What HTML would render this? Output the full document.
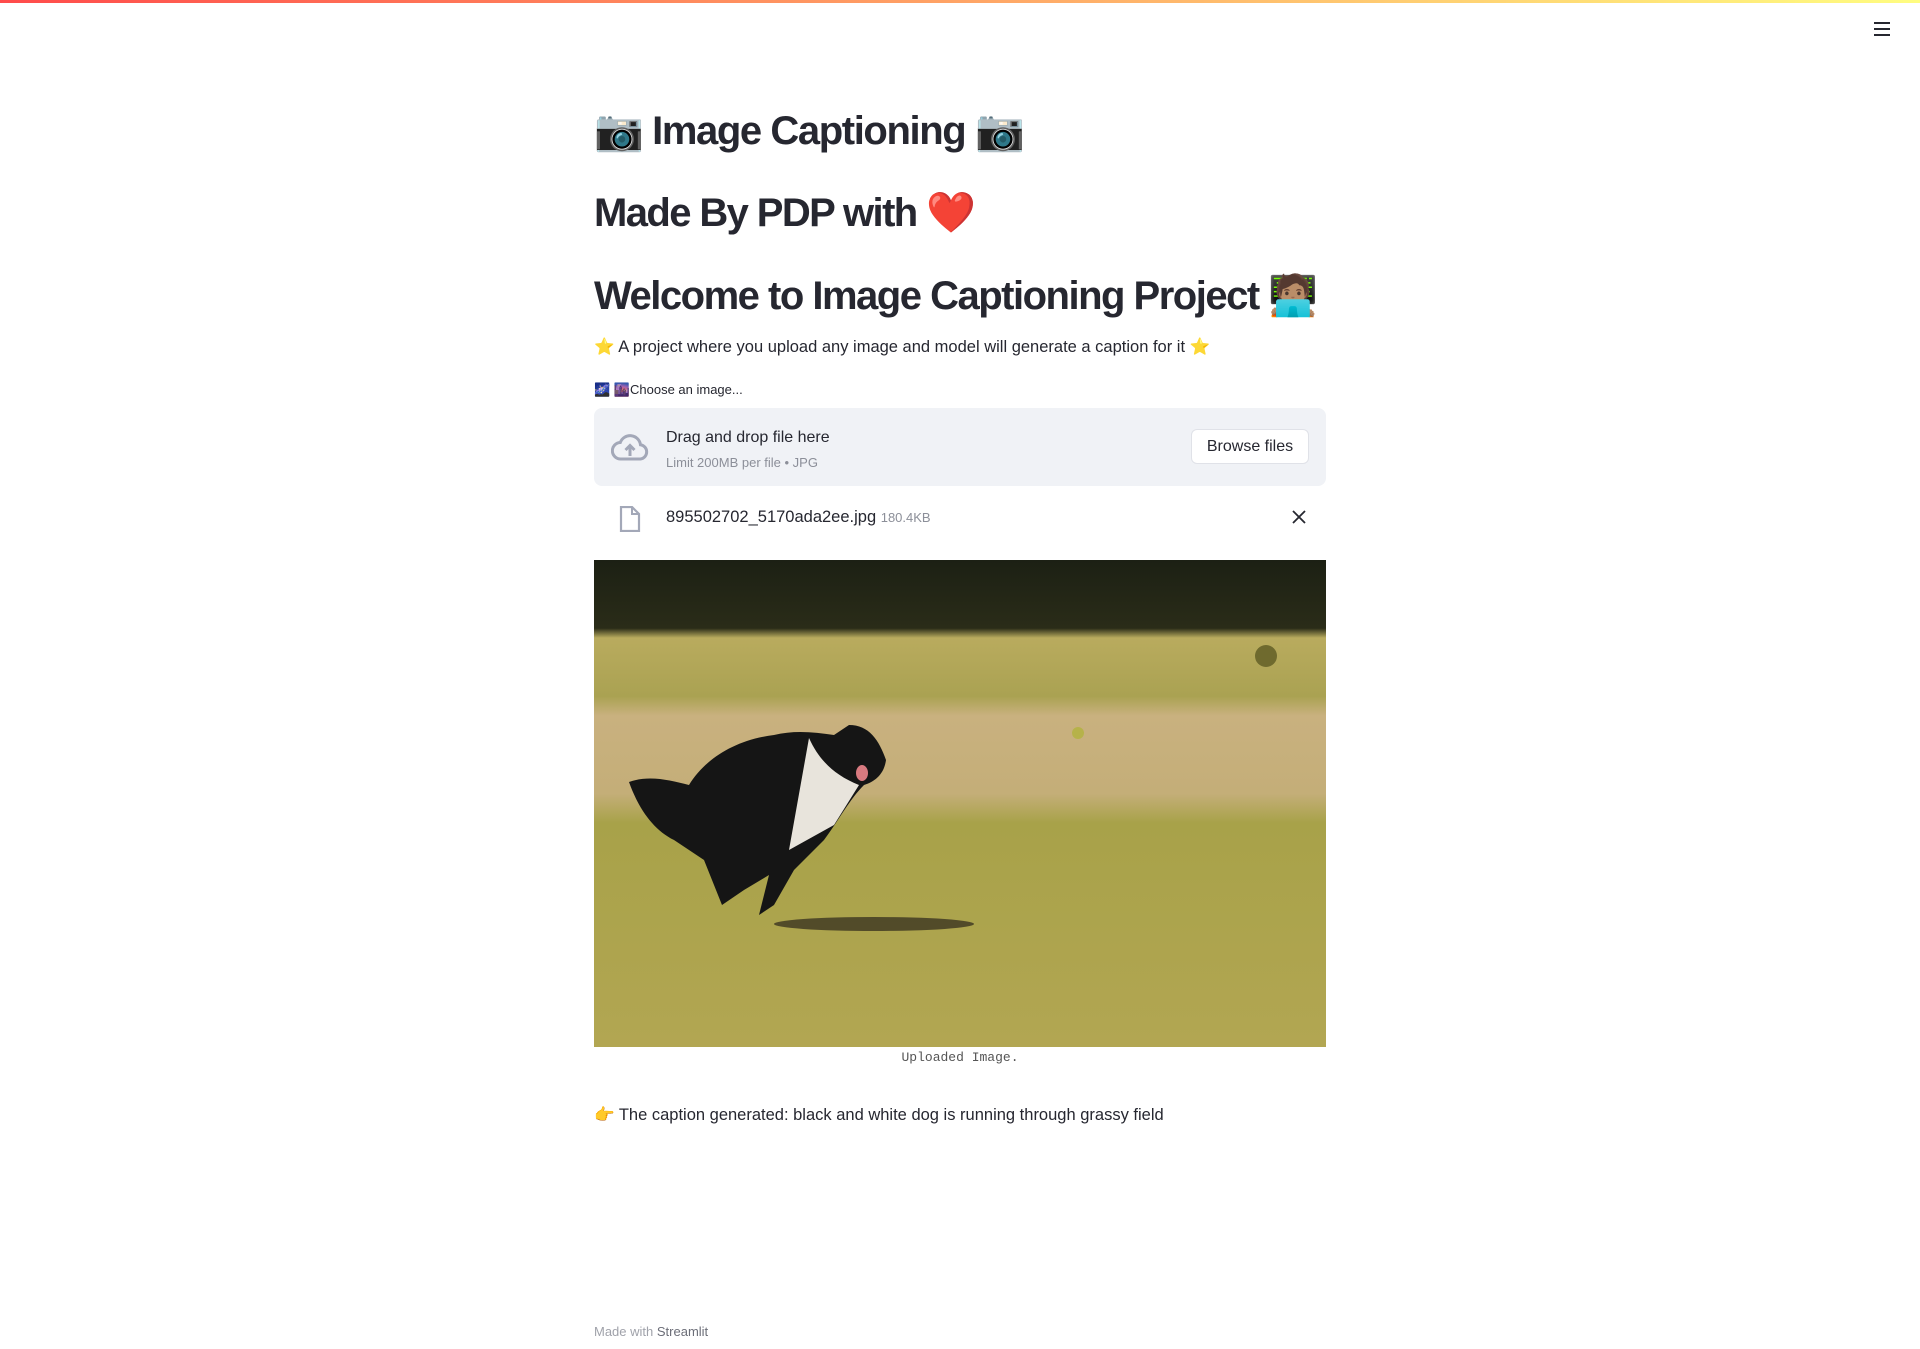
<!DOCTYPE html>
<html><head><meta charset="utf-8"><style>
*{margin:0;padding:0;box-sizing:border-box}
body{width:1920px;height:1349px;background:#fff;font-family:"Liberation Sans","Noto Sans CJK JP",sans-serif;color:#262730;position:relative;overflow:hidden}
.bar{position:absolute;top:0;left:0;width:1920px;height:3px;background:linear-gradient(90deg,#ff4b4b,#fffd80)}
.abs{position:absolute;white-space:nowrap}
h1,h2{font-weight:700;color:#262730}
</style></head><body>
<div class="bar"></div>
<div class="abs" style="left:1874px;top:22px;width:16px">
<div style="height:2px;background:#262730;margin-bottom:4px"></div>
<div style="height:2px;background:#262730;margin-bottom:4px"></div>
<div style="height:2px;background:#262730"></div></div>

<h1 class="abs" style="left:594px;top:106px;font-size:40px;letter-spacing:-1.4px;line-height:50px">📷 Image Captioning 📷</h1>
<h2 class="abs" style="left:594px;top:188px;font-size:40px;letter-spacing:-1.6px;line-height:50px">Made By PDP with ❤️</h2>
<h2 class="abs" style="left:594px;top:271px;font-size:40px;letter-spacing:-1.5px;line-height:50px">Welcome to Image Captioning Project 🧑🏽‍💻</h2>
<div class="abs" style="left:594px;top:336px;font-size:16.5px;line-height:22px">⭐ A project where you upload any image and model will generate a caption for it ⭐</div>
<div class="abs" style="left:594px;top:382px;font-size:13px;line-height:16px">🌌 🌆Choose an image...</div>

<div class="abs" style="left:594px;top:408px;width:732px;height:78px;background:#f0f2f6;border-radius:8px">
<svg style="position:absolute;left:17px;top:24px" width="38" height="30" viewBox="0 0 24 20"><path d="M19 8.5A7 7 0 0 0 5.5 7 5.5 5.5 0 0 0 6 18h13a4.8 4.8 0 0 0 0-9.5z" fill="none" stroke="#a3a8b8" stroke-width="2"/><path d="M12 16v-6M9 12l3-3 3 3" stroke="#a3a8b8" stroke-width="2" fill="none"/></svg>
<div class="abs" style="left:72px;top:21px;font-size:16px">Drag and drop file here</div>
<div class="abs" style="left:72px;top:47px;font-size:13px;color:#8c8f99">Limit 200MB per file • JPG</div>
<div class="abs" style="left:597px;top:21px;width:118px;height:35px;background:#fff;border:1px solid #e0e2e8;border-radius:6px;font-size:16px;line-height:33px;text-align:center">Browse files</div>
</div>

<svg class="abs" style="left:619px;top:506px" width="22" height="26" viewBox="0 0 22 26"><path d="M2 1h11l7 7v17H2z" fill="none" stroke="#a3a8b8" stroke-width="2.2"/><path d="M13 1v7h7" fill="none" stroke="#a3a8b8" stroke-width="2"/></svg>
<div class="abs" style="left:666px;top:508px;font-size:16.5px">895502702_5170ada2ee.jpg <span style="font-size:13px;color:#8c8f99">180.4KB</span></div>
<svg class="abs" style="left:1292px;top:510px" width="14" height="14" viewBox="0 0 14 14"><path d="M1 1l12 12M13 1L1 13" stroke="#262730" stroke-width="1.8"/></svg>

<svg class="abs" style="left:594px;top:560px" width="732" height="487" viewBox="0 0 732 487">
<defs><linearGradient id="g" x1="0" y1="0" x2="0" y2="1">
<stop offset="0" stop-color="#1c2014"/><stop offset=".14" stop-color="#2a2c18"/><stop offset=".16" stop-color="#b9ab5e"/><stop offset=".28" stop-color="#aaa252"/><stop offset=".32" stop-color="#c9b17f"/><stop offset=".48" stop-color="#c4ae78"/><stop offset=".54" stop-color="#a8a249"/><stop offset="1" stop-color="#b2a652"/></linearGradient></defs>
<rect width="732" height="487" fill="url(#g)"/>
<ellipse cx="280" cy="364" rx="100" ry="7" fill="#3b3520" opacity=".8"/>
<path d="M35 222 C55 215 75 220 95 225 C110 200 140 180 180 175 C200 170 220 172 240 175 L255 165 C275 165 285 180 292 200 C290 215 280 222 270 225 C255 240 245 260 230 280 L200 310 L180 345 L165 355 L175 315 L150 330 L128 345 L118 320 L110 300 L80 280 C60 270 45 250 35 222 Z" fill="#151515"/>
<path d="M215 178 C225 200 240 215 265 225 L240 265 L195 290 Z" fill="#e8e4dc"/>
<ellipse cx="268" cy="213" rx="6" ry="8" fill="#d87a80"/>
<circle cx="672" cy="96" r="11" fill="#6f6a2e"/>
<circle cx="484" cy="173" r="6" fill="#b6b24a"/>
</svg>
<div class="abs" style="left:594px;top:1050px;width:732px;text-align:center;font-family:'Liberation Mono',monospace;font-size:13px;color:#555">Uploaded Image.</div>
<div class="abs" style="left:594px;top:1106px;font-size:16.5px">👉 The caption generated: black and white dog is running through grassy field</div>
<div class="abs" style="left:594px;top:1324px;font-size:13px;color:#a0a2aa">Made with <span style="color:#6c6e78">Streamlit</span></div>
</body></html>
